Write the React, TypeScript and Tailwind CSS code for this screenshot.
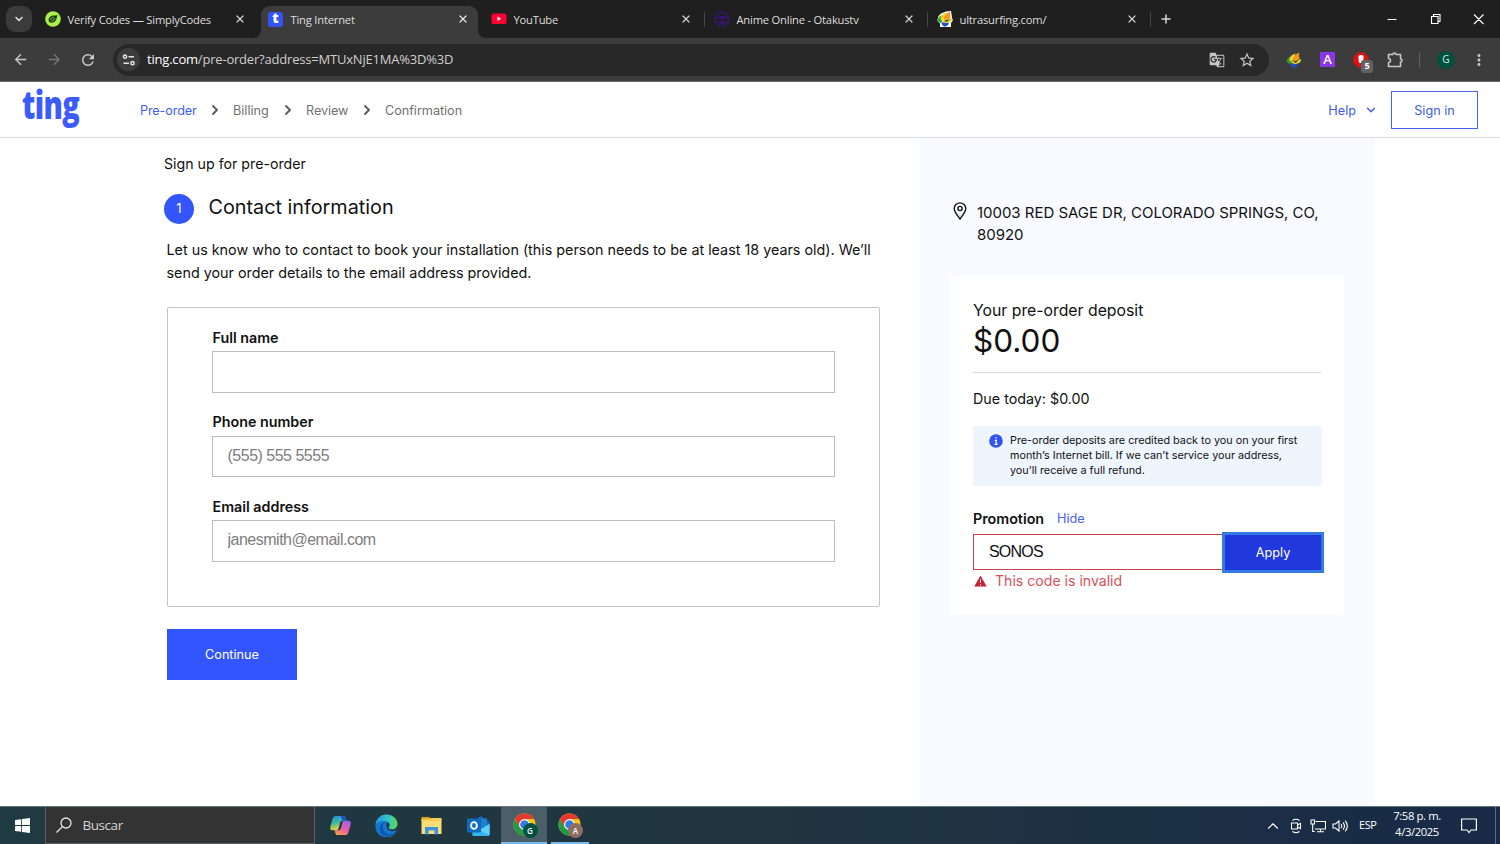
import type { ReactNode } from 'react'
import { ChevronDown, ChevronRight, ChevronUp, Plus, X } from 'lucide-react'
import { MdArrowBack, MdArrowForward, MdGTranslate, MdMoreVert, MdRefresh, MdStarBorder } from 'react-icons/md'

function SimplyCodesIcon() {
  return (
    <svg viewBox="0 0 16 16" className="h-4 w-4">
      <circle cx="8" cy="8" r="7.8" fill="#a8f04a" />
      <path d="M12.800 3.800c-1 .9-2.200.7-3.800.8C6.200 4.700 3.600 6.300 3.600 9c0 1.700 1.300 2.700 3 2.700 3 0 5.100-2.300 5.200-5.600z" fill="#1d3a16" />
      <path d="M5.400 8.800c.5-1.500 1.800-2.400 3.300-2.500M6.600 9.900c1.500 0 2.700-1 3.200-2.600" stroke="#a8f04a" strokeWidth=".9" fill="none" />
    </svg>
  )
}

function TingFavicon() {
  return (
    <span className="flex h-[15px] w-[15px] items-center justify-center rounded-[3px] bg-[#3354fb] pb-[2px] font-['Open_Sans'] text-[14px] leading-none font-extrabold text-white">
      t
    </span>
  )
}

function YouTubeIcon() {
  return (
    <svg viewBox="0 0 16 16" className="h-4 w-4">
      <rect x=".5" y="2.500" width="15" height="10.500" rx="2.600" fill="#ff0033" />
      <path d="M6.500 5.600v4.300l3.700-2.150z" fill="#fff" />
    </svg>
  )
}

function OtakusIcon() {
  return (
    <svg viewBox="0 0 16 16" className="h-4 w-4" fill="none" stroke="#42108f" strokeWidth="1.200">
      <circle cx="8" cy="8" r="7" />
      <path d="M1.500 6.500h4L8 8l2.500-1.500h4M8 8v4.500M5 5.500h6M4.500 10.500 8 12.500l3.500-2" />
    </svg>
  )
}

function UltrasurfIcon({ boxed }: { boxed?: boolean }) {
  return (
    <svg viewBox="0 0 16 16" className="h-4 w-4">
      {boxed && <path d="M4 2.500 9 .5 14 0l1 6.500.8 3L14 12v4H3v-3.500L.3 9.500 1.500 5z" fill="#fff" />}
      <path d="M4.300 11.500h7.500c-.3 2.700-2 3.900-4 3.900-1.800 0-3-1.500-3.500-3.900z" fill="#1e4fc4" />
      <path d="M.8 9c.3-2 1.800-3.800 3.800-5L5 11.800C3 12 1.300 11 .8 9z" fill="#26a43c" />
      <path d="M3.500 6.500C4.500 4 7 2 9.500 1.500L7 8.500l-3 1z" fill="#f2d21d" />
      <path d="M7 8.500C7.200 5 9 2 13.500.8c-.8 2.200-.6 4.200.3 6.200L9 9z" fill="#f59a1c" />
      <path d="M4.500 9.500 8 9l7.300-1.800c-.3 2.600-2 4.300-4.600 4.600C8 12.200 5.500 11.500 4.500 9.500z" fill="#e0d530" />
      <path d="M7 9.800 13 8.300 9.500 10.700z" fill="#2b2b2b" />
    </svg>
  )
}

const tabs: { title: string; icon: ReactNode; active?: boolean; divider?: boolean }[] = [
  { title: 'Verify Codes — SimplyCodes', icon: <SimplyCodesIcon /> },
  { title: 'Ting Internet', icon: <TingFavicon />, active: true },
  { title: 'YouTube', icon: <YouTubeIcon />, divider: true },
  { title: 'Anime Online - Otakustv', icon: <OtakusIcon />, divider: true },
  { title: 'ultrasurfing.com/', icon: <UltrasurfIcon boxed />, divider: true },
]

function TabStrip() {
  return (
    <div className="flex h-[38px] bg-[#1f1f1f]">
      <div className="flex w-[38px] items-center pl-[6px]">
        <div className="flex h-[26px] w-[26px] items-center justify-center rounded-[9px] bg-[#3b3b3b]">
          <ChevronDown className="h-3 w-3 text-[#e3e3e3]" strokeWidth={3} />
        </div>
      </div>
      {tabs.map((tab) => (
        <div
          key={tab.title}
          className={
            tab.active
              ? 'relative mt-[6px] mr-[6px] flex h-8 w-[217px] items-center rounded-t-[9px] bg-[#3c3c3c] pb-[6px] pl-[7px]'
              : 'relative flex w-[223px] items-center pl-[7px]'
          }
        >
          {tab.active && (
            <>
              <svg viewBox="0 0 8 8" className="absolute bottom-0 -left-2 h-2 w-2">
                <path d="M8 0v8H0a8 8 0 0 0 8-8" fill="#3c3c3c" />
              </svg>
              <svg viewBox="0 0 8 8" className="absolute -right-2 bottom-0 h-2 w-2">
                <path d="M0 0v8h8A8 8 0 0 1 0 0" fill="#3c3c3c" />
              </svg>
            </>
          )}
          <span className="flex w-4 shrink-0">{tab.icon}</span>
          <span className="mt-[2px] ml-[6.500px] flex-1 font-['Open_Sans'] text-[11.200px] tracking-[-0.2px] whitespace-nowrap text-[#dedede]">{tab.title}</span>
          <X className={tab.active ? 'mr-[9px] h-3 w-3 text-[#e3e3e3]' : 'mr-[15px] h-3 w-3 text-[#d0d0d0]'} strokeWidth={2.400} />
          {tab.divider && <span className="absolute right-[2px] h-[15px] w-px bg-[#474747]" />}
        </div>
      ))}
      <div className="flex flex-1 items-center">
        <Plus className="ml-[6px] h-[14px] w-[14px] text-[#d5d5d5]" strokeWidth={2.600} />
        <svg viewBox="0 0 100 12" className="mr-[15px] ml-auto h-3 w-[100px]" fill="none" stroke="#fff" strokeWidth="1.100">
          <path d="M2.500 6.500h9M46.500 3.500h6.500v7h-6.500zM48.500 3.500v-2H55v7h-2M89 1.500l9.500 9.500M98.500 1.500 89 11" />
        </svg>
      </div>
    </div>
  )
}

function Toolbar() {
  return (
    <div className="flex h-11 items-center border-b border-[#6b6b6b] bg-[#3c3c3c]">
      <MdArrowBack className="ml-3 h-[17px] w-[17px] text-[#c7c7c7]" />
      <MdArrowForward className="ml-[17px] h-[17px] w-[17px] text-[#757575]" />
      <MdRefresh className="ml-4 h-[18px] w-[18px] text-[#c7c7c7]" />
      <div className="ml-4 flex h-8 w-[1156px] items-center rounded-full bg-[#282828]">
        <div className="ml-1 flex h-[23px] w-[23px] items-center justify-center rounded-full bg-[#3c3c3c]">
          <svg viewBox="0 0 14 14" className="h-[14px] w-[14px]" fill="none" stroke="#e3e3e3" strokeWidth="1.500">
            <circle cx="3" cy="3.700" r="1.600" />
            <path d="M6.500 3.700h5.500M1.500 10.200h5.500" />
            <circle cx="10.500" cy="10.200" r="1.600" />
          </svg>
        </div>
        <span className="ml-[7px] flex-1 font-['Open_Sans'] text-[13px] tracking-[-0.2px] text-[#cfcfcf]">
          <span className="text-white">ting.com</span>/pre-order?address=MTUxNjE1MA%3D%3D
        </span>
        <MdGTranslate className="h-4 w-4 text-[#c7c7c7]" />
        <MdStarBorder className="mr-[13px] ml-[13px] h-[18px] w-[18px] text-[#c7c7c7]" />
      </div>
      <div className="ml-[17px] flex flex-1 items-center">
        <UltrasurfIcon />
        <span className="ml-[18px] flex h-[15px] w-[15px] items-center justify-center bg-[#8b35ea] font-['Open_Sans'] text-[13px] font-semibold text-white">A</span>
        <span className="relative ml-[18px] h-4 w-[19px]">
          <svg viewBox="0 0 16 16" className="h-4 w-4">
            <path d="M5 .5h6L15.500 5v6L11 15.500H5L.5 11V5z" fill="#e01010" />
            <path d="M5.500 4c1-1.500 4-1.500 5 0v7h-4c-1-1-1-4-1-7z" fill="#fff" />
          </svg>
          <span className="absolute top-[8px] left-[8px] flex h-[13px] w-3 items-center justify-center rounded-[3px] bg-[#626262] font-['Open_Sans'] text-[9px] font-bold text-white">5</span>
        </span>
        <svg viewBox="0 0 16 16" className="ml-[15px] h-4 w-4" fill="none" stroke="#c7c7c7" strokeWidth="1.600" strokeLinejoin="round">
          <path d="M1.500 2.500h4.500a1.500 1.500 0 0 1 3 0h4.500v4.500a1.500 1.500 0 0 1 0 3v4.500h-12v-4c2.600 0 2.600-4 0-4z" />
        </svg>
        <span className="ml-4 h-[14px] w-px bg-[#626262]" />
        <span className="ml-[17px] flex h-[18px] w-[18px] items-center justify-center rounded-full bg-[#00513f] font-['Open_Sans'] text-[10px] text-[#d8ece6]">G</span>
        <MdMoreVert className="mr-[12px] ml-auto h-[18px] w-[18px] text-[#c7c7c7]" />
      </div>
    </div>
  )
}

const steps = [
  { name: 'Pre-order', style: 'w-[56px] text-[#3f5ef2] tracking-[-0.15px]' },
  { name: 'Billing', style: 'w-[35px] text-[#717171]' },
  { name: 'Review', style: 'w-[42px] text-[#717171] tracking-[-0.1px]' },
  { name: 'Confirmation', style: 'w-[77px] text-[#717171] tracking-[-0.05px]' },
]

function SiteHeader() {
  return (
    <header className="flex h-14 items-center border-b border-[#dcdcdf] bg-white pr-[22px] pl-[22px]">
      <div className="w-[118px]">
        <span className="-mt-[11px] block origin-left scale-x-[0.76] font-['Open_Sans'] text-[38px] leading-[44px] font-extrabold tracking-[-0.8px] text-[#3b5bfd]">
          ting
        </span>
      </div>
      <nav className="flex items-center pt-[2px] text-[12.700px]">
        {steps.map((step, i) => (
          <span key={step.name} className="flex items-center">
            {i > 0 && <ChevronRight className={i === 2 ? 'mr-[10px] ml-3 h-4 w-4 text-[#5a5a5a]' : 'mr-[10px] ml-[11px] h-4 w-4 text-[#5a5a5a]'} strokeWidth={2.800} />}
            <span className={`whitespace-nowrap ${step.style}`}>{step.name}</span>
          </span>
        ))}
      </nav>
      <div className="ml-auto flex items-center text-[12.700px] text-[#405dec]">
        <span className="pt-[2px]">Help</span>
        <ChevronDown className="mr-[13px] ml-2 h-[14px] w-[14px]" strokeWidth={2.300} />
        <button className="h-[38px] w-[87px] border border-[#4763e4] pt-[2px]">Sign in</button>
      </div>
    </header>
  )
}

const fields = [
  { label: 'Full name', placeholder: '' },
  { label: 'Phone number', placeholder: '(555) 555 5555' },
  { label: 'Email address', placeholder: 'janesmith@email.com' },
]

function ContactForm() {
  return (
    <section className="w-[920px] pt-[15px] pl-[164px]">
      <p className="h-[22px] text-[14.200px] leading-[22px]">Sign up for pre-order</p>
      <div className="mt-[19px] flex h-[30px]">
        <span className="flex h-[30px] w-[30px] items-center justify-center rounded-full bg-[#3355fe] text-[13px] text-white">1</span>
        <h1 className="ml-[14.500px] text-[19.800px] leading-[26px]">Contact information</h1>
      </div>
      <p className="mt-[15px] ml-[2.500px] text-[14.330px] leading-[22.500px] whitespace-nowrap">
        Let us know who to contact to book your installation (this person needs to be at least 18 years old). We’ll
        <br />
        send your order details to the email address provided.
      </p>
      <div className="mt-[23px] ml-[3px] flex h-[300px] w-[713px] flex-col gap-[2px] rounded-[2px] border border-[#c4c4c4] px-[44px] pt-[19px]">
        {fields.map((field) => (
          <label key={field.label} className="block h-[82.400px]">
            <span className="block h-[24.400px] pl-[0.500px] text-[14.300px] leading-[22px] font-semibold">{field.label}</span>
            <input
              placeholder={field.placeholder}
              className="block h-[41.500px] w-[623px] border border-[#bdbdbd] px-[14.500px] pb-px font-['Liberation_Sans'] text-[16px] tracking-[-0.5px] placeholder:text-[#7d7d7d]"
            />
          </label>
        ))}
      </div>
      <button className="mt-[22px] ml-[3px] h-[51px] w-[130px] bg-[#3355fe] text-[12.700px] text-white">Continue</button>
    </section>
  )
}

function OrderSummary() {
  return (
    <aside className="h-full w-[455px] bg-[#f9faff] px-[30px] pt-[63px]">
      <div className="flex h-[75px]">
        <svg viewBox="0 0 14 18" className="mt-[1px] ml-[3px] h-[18px] w-[14px]" fill="none" stroke="#111" strokeWidth="1.400">
          <path d="M7 17C4 12.800 1.200 9.600 1.200 6.700a5.800 5.800 0 0 1 11.600 0C12.800 9.600 10 12.800 7 17z" />
          <circle cx="7" cy="6.500" r="2.100" />
        </svg>
        <p className="ml-[10px] pt-[0.500px] text-[15px] leading-[22.500px] tracking-[-0.03px] whitespace-nowrap">
          10003 RED SAGE DR, COLORADO SPRINGS, CO,
          <br />
          80920
        </p>
      </div>
      <div className="h-[339px] w-[394px] bg-white px-[23px] pt-[23px]">
        <p className="h-[23px] text-[15.800px] leading-[23px]">Your pre-order deposit</p>
        <p className="h-[51px] w-[349px] border-b border-[#dcdcdc] text-[31.500px] leading-[38px]">$0.00</p>
        <p className="mt-[15px] h-[22px] text-[14.300px] leading-[22px]">Due today: $0.00</p>
        <div className="mt-[16px] flex h-[60px] w-[349px] bg-[#eff5ff] pt-[7px] pl-[15.500px]">
          <svg viewBox="0 0 14 14" className="mt-px h-[14px] w-[14px]">
            <circle cx="7" cy="7" r="6.800" fill="#3152f5" />
            <path d="M7 3v1.600M5.700 6.300H7.200v4M5.500 10.400h3.200" stroke="#fff" strokeWidth="1.300" fill="none" />
          </svg>
          <p className="ml-[7.500px] text-[10.800px] leading-[15px] whitespace-nowrap">
            Pre-order deposits are credited back to you on your first
            <br />
            month’s Internet bill. If we can’t service your address,
            <br />
            you’ll receive a full refund.
          </p>
        </div>
        <p className="mt-[21px] flex h-[23px] items-center text-[14.300px]">
          <span className="w-[84px] font-semibold">Promotion</span>
          <span className="pt-px text-[12.700px] text-[#4562ee]">Hide</span>
        </p>
        <div className="mt-[4px] flex h-[37px]">
          <input defaultValue="SONOS" className="h-9 w-[253px] border border-[#c9414f] px-[15px] pb-px font-['Liberation_Sans'] text-[16px] tracking-[-0.8px]" />
          <button className="mt-px h-[35px] w-24 shrink-0 bg-[#2139dc] text-[12.700px] text-white outline-3 outline-[#3579e3]">Apply</button>
        </div>
        <p className="flex h-5 items-center text-[14.100px] text-[#d6505c]">
          <svg viewBox="0 0 13 12" className="mr-2 ml-px h-3 w-[13px]">
            <path d="M6.500.5 12.700 11.500H.3z" fill="#c41f33" />
            <path d="M6.500 4v4M6.500 9v1.300" stroke="#f5d5d8" strokeWidth="1.100" />
          </svg>
          This code is invalid
        </p>
      </div>
    </aside>
  )
}

function CopilotIcon() {
  return (
    <svg viewBox="0 0 24 22" className="h-[21px] w-[23px]">
      <defs>
        <linearGradient id="cpA" x1="0" y1="0" x2=".3" y2="1">
          <stop offset="0" stopColor="#2f86e8" />
          <stop offset=".5" stopColor="#35b8a0" />
          <stop offset="1" stopColor="#f0d433" />
        </linearGradient>
        <linearGradient id="cpB" x1=".7" y1="0" x2=".2" y2="1">
          <stop offset="0" stopColor="#a65fe8" />
          <stop offset=".55" stopColor="#ee5ea0" />
          <stop offset="1" stopColor="#f9a34a" />
        </linearGradient>
      </defs>
      <path d="M7 1h8c1.500 0 2 1 2.500 2.500l.8 2.500H14c-1.500 0-2 .8-2.500 2.500L10 14c-.4 1.500-1 2-2.500 2H3.500C1.500 16 .8 14.500 1.400 12L3.700 4C4.300 2 5.500 1 7 1z" fill="url(#cpA)" />
      <path d="M17 21H9c-1.500 0-2-1-2.500-2.500L5.700 16H10c1.500 0 2-.8 2.500-2.500L14 8c.4-1.500 1-2 2.500-2h4c2 0 2.700 1.500 2.100 4L20.300 18c-.6 2-1.800 3-3.300 3z" fill="url(#cpB)" />
      <path d="M12 1h3c1.500 0 2 1 2.500 2.500l.8 2.500h-4z" fill="#1b52c8" />
    </svg>
  )
}

function EdgeIcon() {
  return (
    <svg viewBox="0 0 24 24" className="h-[23px] w-[23px]">
      <defs>
        <linearGradient id="edA" x1="0" y1=".4" x2="1" y2=".4">
          <stop offset="0" stopColor="#2295dc" />
          <stop offset=".6" stopColor="#35c4c4" />
          <stop offset="1" stopColor="#5fd94f" />
        </linearGradient>
      </defs>
      <path d="M.5 12C.5 5.600 5.600.5 12 .5c3 0 3 6 .5 8.500-1.500 2-.5 6 2 8 2 1.300 4.500 1.300 7 .3.700-.3 1.100.3.700.9A11.500 11.500 0 0 1 .5 12z" fill="#1478d0" />
      <path d="M11 8.500c-2.500 1.500-3.300 4-2.700 6.500.8 3.500 4 6 7.700 6 2.200 0 4-.6 5.700-2.200C19.500 22 16 23.500 12.500 23.500 8 23.500 5 20 5 15.500c0-3.500 2.500-6.500 6-7z" fill="#0c58ae" />
      <path d="M.6 11C1.300 5 6 .5 12 .5c6.500 0 11.500 4.500 11.500 9.700 0 3.600-2.500 5.800-5.600 5.800-2.200 0-3.600-.7-3.600-1.700 0-.8 1-1.200 1-2.600 0-2.600-2.700-4.400-6.100-4.400-3.400 0-6.600 1.200-8.600 3.700z" fill="url(#edA)" />
    </svg>
  )
}

function FolderIcon() {
  return (
    <svg viewBox="0 0 21 19" className="h-[19px] w-[21px]">
      <path d="M.5 1h8l1.500 2.500H.5z" fill="#e0a21d" />
      <path d="M.5 3h20v15H.5z" fill="#fcdc74" />
      <path d="M.5 3h8l1.500-1h10.500v3H.5z" fill="#f6cd54" />
      <path d="M4 11h13v7.500h-3.500v-4h-6v4H4z" fill="#3f92d8" />
    </svg>
  )
}

function OutlookIcon() {
  return (
    <svg viewBox="0 0 23 22" className="h-[22px] w-[23px]">
      <path d="M4 8 13.500 1 22.500 7v13.500H5z" fill="#1566b8" />
      <path d="M13 3.500h7v9h-7z" fill="#1c7fd0" />
      <path d="M22.500 9v10.500q0 1.500-1.500 1.500H7q-1.500 0-1.500-1.500V15.500l8 .5z" fill="#35b6ee" />
      <path d="M22.500 9v11L12 15z" fill="#62d0f5" />
      <rect x="0" y="3.500" width="14" height="14" rx="1.200" fill="#0f6cbd" />
      <ellipse cx="7" cy="10.500" rx="2.900" ry="3.400" fill="none" stroke="#fff" strokeWidth="1.900" />
    </svg>
  )
}

function ChromeIcon() {
  return (
    <svg viewBox="0 0 24 24" className="h-[23px] w-[23px]">
      <circle cx="12" cy="12" r="11.500" fill="#fbc116" />
      <path d="M2 6.200A11.500 11.500 0 0 0 12 23.500l5-8.700-5 2.500-5-2.500z" fill="#259b48" />
      <path d="M2 6.200A11.500 11.500 0 0 1 22 6.300H12L7 15z" fill="#e23b30" />
      <circle cx="12" cy="12" r="5.700" fill="#fff" />
      <circle cx="12" cy="12" r="4.500" fill="#2f7de6" />
    </svg>
  )
}

function ChromeTask({ letter, badge }: { letter: string; badge: string }) {
  return (
    <span className="relative mt-[3px] h-[23px] w-[23px]">
      <ChromeIcon />
      <span className={`absolute top-[10px] left-[10px] flex h-[15px] w-[15px] items-center justify-center rounded-full font-['Open_Sans'] text-[8px] font-semibold text-white ${badge}`}>
        {letter}
      </span>
    </span>
  )
}

function Taskbar() {
  return (
    <footer className="flex h-[38px] items-center border-t border-[#64767e] bg-linear-to-r from-[#203a42] via-[#20353f] to-[#182a47] font-['Open_Sans'] text-white">
      <div className="flex w-[45px] justify-center">
        <svg viewBox="0 0 15 15" className="h-[15px] w-[15px]" fill="#fff">
          <path d="M0 2.100 6.200 1.200V7H0zM7 1.100 15 0v7H7zM0 7.900h6.200v5.800L0 12.900zM7 7.900h8V15l-8-1.100z" />
        </svg>
      </div>
      <div className="flex h-full w-[270px] items-center border border-t-0 border-[#5b5f61] bg-[#333333]">
        <svg viewBox="0 0 16 16" className="ml-[10px] h-4 w-4" fill="none" stroke="#e6e6e6" strokeWidth="1.300">
          <circle cx="10" cy="6" r="5" />
          <path d="M6.400 9.600.5 15.500" />
        </svg>
        <span className="mt-px ml-[10.500px] text-[13.500px] tracking-[-0.45px] text-[#d4d4d4]">Buscar</span>
      </div>
      <div className="flex h-full items-center">
        <span className="flex w-[50px] justify-center"><CopilotIcon /></span>
        <span className="flex w-[42px] justify-center"><EdgeIcon /></span>
        <span className="flex w-[49px] justify-center"><FolderIcon /></span>
        <span className="flex w-[45px] justify-center pr-px"><OutlookIcon /></span>
        <span className="flex h-full w-[46px] justify-center border-b-2 border-[#76b9ed] bg-[#4c5f69] pt-[3px]">
          <ChromeTask letter="G" badge="bg-[#00513f]" />
        </span>
        <span className="ml-1 flex h-full w-[38px] justify-center border-b-2 border-[#76b9ed] pt-[3px] pr-px">
          <ChromeTask letter="A" badge="bg-[#8d6e63]" />
        </span>
      </div>
      <div className="ml-auto flex h-full items-center">
        <ChevronUp className="h-[18px] w-[18px]" strokeWidth={1.500} />
        <svg viewBox="0 0 12 16" className="ml-[8px] h-4 w-3" fill="none" stroke="#fff" strokeWidth="1.100">
          <path d="M1.500 5h6v6h-6zM7.500 7l3-1.500v5l-3-1.500M2.500 2.500Q6 0 9.500 2.500M2.500 13.500Q6 16 9.500 13.500" />
        </svg>
        <svg viewBox="0 0 16 14" className="ml-[8px] h-[14px] w-4" fill="none" stroke="#fff" strokeWidth="1.100">
          <path d="M5.500 2.500h10v7.500H5M10.500 10v2.500M7 12.700h7M1 1h3.500v4H1zM2.700 5v7.500h2" />
        </svg>
        <svg viewBox="0 0 17 14" className="ml-[6px] h-[14px] w-[17px]" fill="none" stroke="#fff" strokeWidth="1.100">
          <path d="M1 5h2.500L7 2v10L3.500 9H1zM9 5q1.500 2 0 4M11 3.300q3 3.700 0 7.400M13.200 1.700q4.300 5.300 0 10.600" />
        </svg>
        <span className="ml-[10px] w-[19px] text-[11px] tracking-[-0.4px]">ESP</span>
        <div className="-mt-[3px] ml-[14px] w-[50px] text-center text-[11.300px] leading-[16.500px] tracking-[-0.4px] whitespace-nowrap">
          <p>7:58 p. m.</p>
          <p>4/3/2025</p>
        </div>
        <svg viewBox="0 0 16 16" className="ml-[19px] h-4 w-4" fill="none" stroke="#fff" strokeWidth="1.200">
          <path d="M.6 1h14.800v11H10l-2 2.500L6 12H.6z" />
        </svg>
        <span className="ml-[18px] h-full w-[5px] border-l border-[#5b687d]" />
      </div>
    </footer>
  )
}

export default function App() {
  return (
    <div className="flex h-[844px] w-[1500px] flex-col overflow-hidden bg-white font-['Inter'] text-[#111]">
      <TabStrip />
      <Toolbar />
      <SiteHeader />
      <main className="flex h-[668px]">
        <ContactForm />
        <OrderSummary />
      </main>
      <Taskbar />
    </div>
  )
}
